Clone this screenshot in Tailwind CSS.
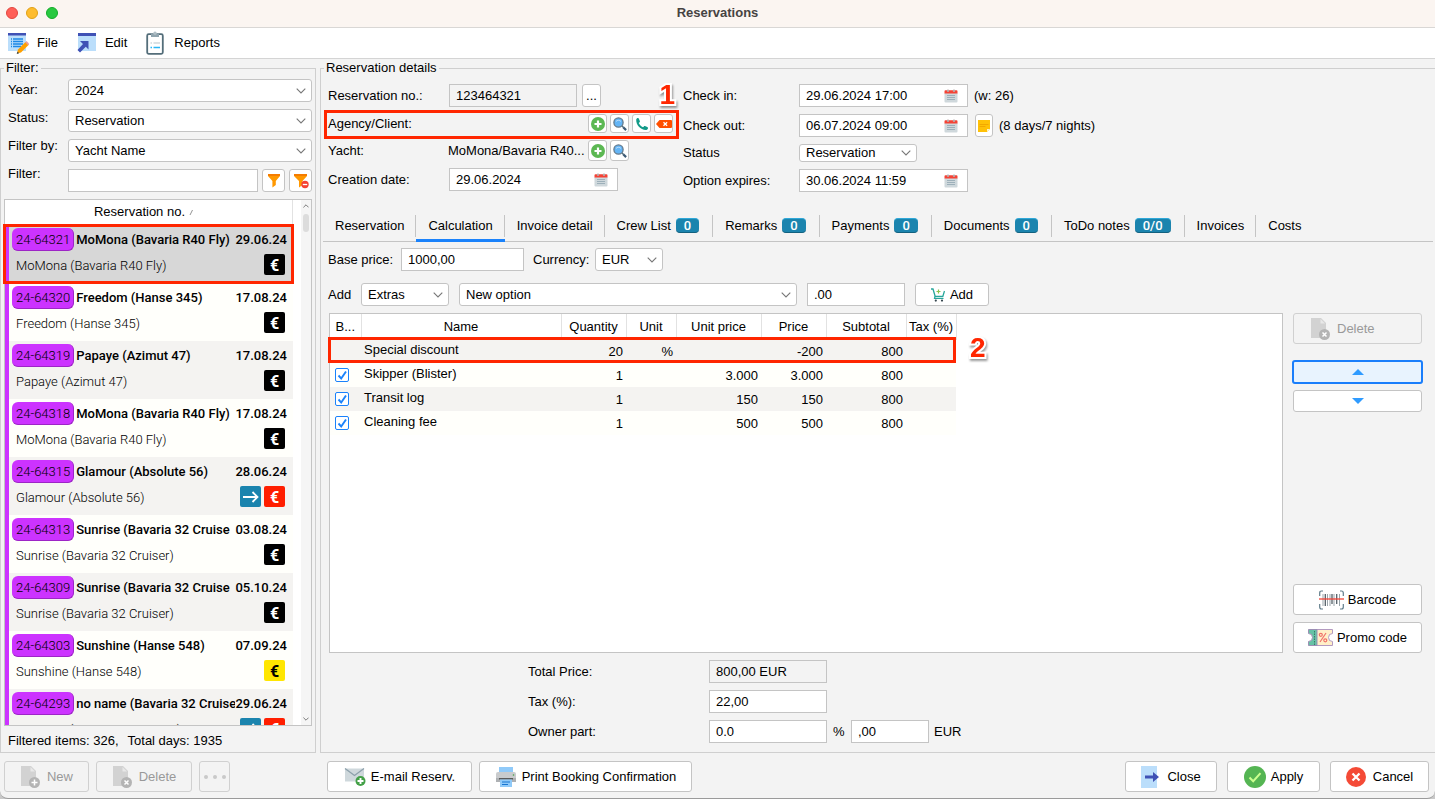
<!DOCTYPE html>
<html lang="en">
<head>
    <meta charset="UTF-8">
    <meta name="viewport" content="width=device-width, initial-scale=1.0">
    <title>Reservations</title>
    <script src="https://cdn.jsdelivr.net/npm/@tailwindcss/browser@4"></script>
</head>
<body class="h-screen overflow-hidden bg-[#c8c8c8] font-['Liberation_Sans',Arial,sans-serif] text-[13px] leading-4 text-black">

    <!-- Shared icons -->
    <svg class="hidden" aria-hidden="true">
        <symbol id="i-chevron" viewBox="0 0 10 6"><path d="M.7.7 5 5 9.3.7" fill="none" stroke="#777" stroke-width="1.1"/></symbol>
        <symbol id="i-calendar" viewBox="0 0 14 14">
            <path d="M.5 4h13v8.500a1 1 0 0 1-1 1h-11a1 1 0 0 1-1-1z" fill="#cfd8dc"/>
            <path d="M.5 4.500V2.300a1 1 0 0 1 1-1h11a1 1 0 0 1 1 1v2.200z" fill="#f44336"/>
            <circle cx="4" cy="1.700" r="1.200" fill="#b9a9a9"/><circle cx="10" cy="1.700" r="1.200" fill="#b9a9a9"/>
            <path d="M3 6.500h8M3 8.500h8M3 10.500h8" stroke="#9db0ba" stroke-width="1"/>
        </symbol>
        <symbol id="i-plus" viewBox="0 0 14 14"><circle cx="7" cy="7" r="7" fill="#5cb853"/><path d="M7 3.500v7M3.500 7h7" stroke="#fff" stroke-width="2.200"/></symbol>
        <symbol id="i-search" viewBox="0 0 14 14">
            <path d="m8.800 8.800 1.500 1.500" stroke="#546e7a" stroke-width="1.500"/>
            <path d="m10.200 10.200 2.900 2.900" stroke="#3d5a74" stroke-width="2.200"/>
            <circle cx="5.500" cy="5.500" r="4.600" fill="#64b5f6" stroke="#62798c" stroke-width="1.300"/>
            <path d="M3 4.500a3.200 3.200 0 0 1 5 0" fill="none" stroke="#bbdefb" stroke-width="1"/>
        </symbol>
        <symbol id="i-doc" viewBox="0 0 20 22">
            <path d="M1 0h10l5 5v15H1z" fill="#d2d2d2"/><path d="M10.500 1v4.500H15z" fill="#e8e8e8"/>
            <circle cx="14.500" cy="16.500" r="5.500" fill="#b4b4b4"/>
        </symbol>
    </svg>

    <div class="flex h-full flex-col rounded-b-lg border-b border-[#9a9a9a] bg-[#f3f3f3]">
        <header class="grid h-[28px] shrink-0 grid-cols-[1fr_auto_1fr] items-center border-b border-[#d9d7d5] bg-[#fbf5f1] px-1.5 pb-px">
            <div class="flex gap-2">
                <button aria-label="Close window" class="size-3 rounded-full border border-[#e2463f] bg-[#ff5f57]"></button>
                <button aria-label="Minimize window" class="size-3 rounded-full border border-[#e1a116] bg-[#febc2e]"></button>
                <button aria-label="Zoom window" class="size-3 rounded-full border border-[#12ac28] bg-[#28c840]"></button>
            </div>
            <h1 class="font-bold text-[#464342]">Reservations</h1>
        </header>

        <nav class="flex h-[31px] shrink-0 items-center gap-[19px] border-b border-[#d4d4d4] bg-white px-2">
            <button class="flex items-center gap-2">
                <svg class="size-[21px]" viewBox="0 0 21 21">
                    <path d="M0 1h18v17H0z" fill="#bbdefb"/><path d="M0 0h18v2.500H0z" fill="#3f51b5"/>
                    <path d="M3 6h1M5 6h10M3 8.500h1M5 8.500h10M3 11h1M5 11h10M3 13.500h1M5 13.500h8" stroke="#1e88e5" stroke-width="1.300"/>
                    <path d="m17.500 9 3 3-7.500 7.500-4 1 1-4z" fill="#ffa000"/><path d="m17.300 9.200 1.200-1.200 3 3-1.200 1.200z" fill="#ef9a9a"/><path d="m9.500 18.500-.8 2.500 2.500-.8z" fill="#37474f"/>
                </svg>
                File
            </button>
            <button class="flex items-center gap-2">
                <svg class="size-5" viewBox="0 0 20 20">
                    <path d="M1 1h18v17H1z" fill="#bbdefb"/><path d="M1 0h18v3H1z" fill="#3f51b5"/>
                    <path d="M3 8h8.500v8.500L8.800 13.800 3 19.500.5 17 6 11z" fill="#3f51b5"/>
                </svg>
                Edit
            </button>
            <button class="flex items-center gap-2">
                <svg class="h-6 w-5" viewBox="0 0 20 24">
                    <rect x="1.200" y="3.200" width="15.600" height="19.600" rx="1.500" fill="#fff" stroke="#546e7a" stroke-width="1.800"/>
                    <path d="M5 2.500h2.500a1.600 1.600 0 0 1 3 0H13V6H5z" fill="#90a4ae"/><circle cx="9" cy="2.200" r="1.700" fill="#b0bec5"/>
                    <path d="M4.500 12H6M7.500 12H14" stroke="#cfd8dc" stroke-width="1.500"/><path d="M4.500 16.500H6M7.500 16.500H14" stroke="#29b6f6" stroke-width="1.500"/>
                </svg>
                Reports
            </button>
        </nav>

        <main class="flex min-h-0 flex-1 gap-1 pt-px">
            <!-- Filter and reservation list -->
            <fieldset class="flex w-[316px] min-w-0 shrink-0 flex-col border border-[#cfcfcf] px-[3px] pt-[3px]">
                <legend class="px-[2px]">Filter:</legend>
                <div class="flex">
                    <div class="flex w-16 shrink-0 flex-col gap-3 pt-[3px] pl-1">
                        <label for="year">Year:</label>
                        <label for="filter-status">Status:</label>
                        <label for="filter-by">Filter by:</label>
                        <label for="filter-text">Filter:</label>
                    </div>
                    <div class="flex min-w-0 flex-1 flex-col gap-[7px]">
                        <div class="grid items-center">
                            <select id="year" class="col-start-1 row-start-1 h-[23px] appearance-none rounded-[3px] border border-[#c4c4c4] bg-white pl-1.5"><option>2024</option></select>
                            <svg class="pointer-events-none col-start-1 row-start-1 mr-1.5 h-1.5 w-2.5 justify-self-end"><use href="#i-chevron"/></svg>
                        </div>
                        <div class="grid items-center">
                            <select id="filter-status" class="col-start-1 row-start-1 h-[23px] appearance-none rounded-[3px] border border-[#c4c4c4] bg-white pl-1.5"><option>Reservation</option></select>
                            <svg class="pointer-events-none col-start-1 row-start-1 mr-1.5 h-1.5 w-2.5 justify-self-end"><use href="#i-chevron"/></svg>
                        </div>
                        <div class="grid items-center">
                            <select id="filter-by" class="col-start-1 row-start-1 h-[23px] appearance-none rounded-[3px] border border-[#c4c4c4] bg-white pl-1.5"><option>Yacht Name</option></select>
                            <svg class="pointer-events-none col-start-1 row-start-1 mr-1.5 h-1.5 w-2.5 justify-self-end"><use href="#i-chevron"/></svg>
                        </div>
                        <div class="flex gap-1">
                            <input id="filter-text" type="text" class="h-[23px] min-w-0 flex-1 border border-[#c4c4c4] bg-white px-1.5">
                            <button aria-label="Apply filter" class="flex h-[23px] w-[23px] items-center justify-center rounded-[3px] border border-[#c4c4c4] bg-white">
                                <svg class="size-3.5" viewBox="0 0 14 14"><path d="M1 0h12v2L8.800 7v4L5.400 13.500V7L1 2z" fill="#ff9800"/><path d="M1 0h12v2H1z" fill="#f57c00"/></svg>
                            </button>
                            <button aria-label="Clear filter" class="flex h-[23px] w-[23px] items-center justify-center rounded-[3px] border border-[#c4c4c4] bg-white">
                                <svg class="size-4" viewBox="0 0 16 16"><path d="M1 1h13v2L9.500 8v4L6 14.500V8L1 3z" fill="#ff9800"/><path d="M1 1h13v2H1z" fill="#f57c00"/><circle cx="12" cy="11.500" r="3.700" fill="#f44336"/><path d="M9.800 11.500h4.400" stroke="#fff" stroke-width="1.300"/></svg>
                            </button>
                        </div>
                    </div>
                </div>

                <div class="relative mt-[7px] flex min-h-0 flex-1 border border-[#c4c4c4] bg-white">
                    <div class="mr-2 flex min-w-0 flex-1 flex-col">
                        <div class="flex h-[25px] shrink-0 items-center justify-center gap-1 border-r border-b border-[#e2e2e2] pr-2">
                            Reservation no.
                            <svg class="size-1.5" viewBox="0 0 6 6"><path d="M1 6 3.500 1" stroke="#888" stroke-width=".9"/></svg>
                        </div>
                        <ul id="reservation-list" class="min-h-0 flex-1 overflow-hidden border-l-4 border-[#cc33ff] font-[Roboto,sans-serif]"></ul>
                    </div>
                    <div class="flex w-2.5 shrink-0 flex-col items-center bg-[#f5f5f5] py-1">
                        <svg class="h-1 w-1.5" viewBox="0 0 10 6"><path d="M.7 5.300 5 1l4.300 4.300" fill="none" stroke="#777" stroke-width="1.600"/></svg>
                        <div class="mt-1.5 h-[18px] w-1.5 rounded-full bg-[#dcdcdc]"></div>
                        <svg class="mt-auto h-1 w-1.5" viewBox="0 0 10 6"><path d="M.7.7 5 5 9.300.7" fill="none" stroke="#777" stroke-width="1.600"/></svg>
                    </div>
                    <div class="pointer-events-none absolute top-6 right-[17px] -left-0.5 h-[60px] border-3 border-[#ff2600]"></div>
                </div>
                <p class="flex h-[26px] shrink-0 items-center gap-[9px] pt-1 pl-1"><span>Filtered items: 326,</span><span>Total days: 1935</span></p>
            </fieldset>

            <!-- Reservation details -->
            <fieldset class="flex min-w-0 flex-1 flex-col border border-r-0 border-[#cfcfcf] pt-2">
                <legend class="ml-[3px] px-[2px]">Reservation details</legend>
                <div class="flex pl-[7px]">
                    <div class="flex w-[355px] shrink-0 flex-col gap-[7px]">
                        <div class="flex items-center">
                            <label for="res-no" class="w-[121px]">Reservation no.:</label>
                            <input id="res-no" type="text" readonly value="123464321" class="mr-[5px] h-[23px] w-32 border border-[#c4c4c4] px-1.5">
                            <button aria-label="Browse" class="h-[23px] w-[19px] rounded-[3px] border border-[#c4c4c4] bg-white">...</button>
                        </div>
                        <div class="relative flex h-[19px] items-center">
                            <span class="w-[260px]">Agency/Client:</span>
                            <div class="flex gap-[3px]">
                                <button aria-label="Add client" class="flex size-[19px] items-center justify-center rounded-[3px] border border-[#c4c4c4] bg-white"><svg class="size-3.5"><use href="#i-plus"/></svg></button>
                                <button aria-label="Find client" class="flex size-[19px] items-center justify-center rounded-[3px] border border-[#c4c4c4] bg-white"><svg class="size-3.5"><use href="#i-search"/></svg></button>
                                <button aria-label="Call client" class="flex size-[19px] items-center justify-center rounded-[3px] border border-[#c4c4c4] bg-white">
                                    <svg class="size-3.5" viewBox="0 0 14 14"><path d="M1.200 2.600C1.300 1.700 2.200 1 3 1c.5 0 .7.300.9.8l1 2.400c.1.400 0 .7-.3 1L3.700 6c.9 1.900 2.400 3.400 4.300 4.300l.9-.9c.3-.3.6-.4 1-.3l2.400 1c.5.2.7.500.7 1 0 .9-.8 1.800-1.700 1.900C5.800 13.300.9 8.200 1.200 2.600z" fill="#129a88"/></svg>
                                </button>
                                <button aria-label="Remove client" class="flex size-[19px] items-center justify-center rounded-[3px] border border-[#c4c4c4] bg-white">
                                    <svg class="h-2 w-4 shrink-0" viewBox="0 0 16 8"><path d="M3.500 0H15a1 1 0 0 1 1 1v6a1 1 0 0 1-1 1H3.500L0 4z" fill="#ff4f00"/><path d="m7.500 2.200 3.600 3.600m0-3.600L7.500 5.800" stroke="#fff" stroke-width="1.300"/></svg>
                                </button>
                            </div>
                            <div class="pointer-events-none absolute -top-1 right-1 -left-1 h-[29px] border-3 border-[#ff2600]"></div>
                            <span class="absolute right-2 bottom-6 text-[28px] leading-7 font-bold text-[#ff2600] drop-shadow-[1px_2px_1px_rgba(0,0,0,0.4)] [-webkit-text-stroke:4px_white] [paint-order:stroke_fill]">1</span>
                        </div>
                        <div class="flex h-[21px] items-center">
                            <span class="w-[120px]">Yacht:</span>
                            <span class="w-[140px] whitespace-nowrap">MoMona/Bavaria R40...</span>
                            <div class="flex gap-[3px]">
                                <button aria-label="Add yacht" class="flex h-[21px] w-[19px] items-center justify-center rounded-[3px] border border-[#c4c4c4] bg-white"><svg class="size-3.5"><use href="#i-plus"/></svg></button>
                                <button aria-label="Find yacht" class="flex h-[21px] w-[19px] items-center justify-center rounded-[3px] border border-[#c4c4c4] bg-white"><svg class="size-3.5"><use href="#i-search"/></svg></button>
                            </div>
                        </div>
                        <div class="flex items-center">
                            <label for="created" class="w-[121px]">Creation date:</label>
                            <div class="flex h-[23px] w-[169px] items-center border border-[#c4c4c4] bg-white pr-[9px] pl-1.5">
                                <input id="created" type="text" value="29.06.2024" class="min-w-0 flex-1">
                                <button aria-label="Pick creation date"><svg class="size-3.5"><use href="#i-calendar"/></svg></button>
                            </div>
                        </div>
                    </div>

                    <div class="flex flex-col gap-[7px]">
                        <div class="flex items-center">
                            <label for="check-in" class="w-[116px]">Check in:</label>
                            <div class="flex h-[23px] w-[169px] items-center border border-[#c4c4c4] bg-white pr-[9px] pl-1.5">
                                <input id="check-in" type="text" value="29.06.2024 17:00" class="min-w-0 flex-1">
                                <button aria-label="Pick check in date"><svg class="size-3.5"><use href="#i-calendar"/></svg></button>
                            </div>
                            <span class="ml-1.5">(w: 26)</span>
                        </div>
                        <div class="flex items-center">
                            <label for="check-out" class="w-[116px]">Check out:</label>
                            <div class="flex h-[23px] w-[169px] items-center border border-[#c4c4c4] bg-white pr-[9px] pl-1.5">
                                <input id="check-out" type="text" value="06.07.2024 09:00" class="min-w-0 flex-1">
                                <button aria-label="Pick check out date"><svg class="size-3.5"><use href="#i-calendar"/></svg></button>
                            </div>
                            <button aria-label="Note" class="mr-1.5 ml-[7px] flex h-[23px] w-[18px] items-center justify-center rounded-[3px] border border-[#c4c4c4] bg-white">
                                <svg class="size-3 shrink-0" viewBox="0 0 12 12"><path d="M0 0h12v9l-3 3H0z" fill="#ffc107"/><path d="M9 12V9h3z" fill="#fff3c4"/><path d="M1.500 4.500h9M1.500 6.500h6" stroke="#f0a500" stroke-width=".9"/></svg>
                            </button>
                            <span>(8 days/7 nights)</span>
                        </div>
                        <div class="flex items-center">
                            <label for="status" class="w-[116px]">Status</label>
                            <div class="grid w-[118px] items-center">
                                <select id="status" class="col-start-1 row-start-1 h-[18px] appearance-none rounded-[3px] border border-[#c4c4c4] bg-white pl-1.5"><option>Reservation</option></select>
                                <svg class="pointer-events-none col-start-1 row-start-1 mr-1.5 h-1.5 w-2.5 justify-self-end"><use href="#i-chevron"/></svg>
                            </div>
                        </div>
                        <div class="flex items-center">
                            <label for="expires" class="w-[116px]">Option expires:</label>
                            <div class="flex h-[23px] w-[169px] items-center border border-[#c4c4c4] bg-white pr-[9px] pl-1.5">
                                <input id="expires" type="text" value="30.06.2024 11:59" class="min-w-0 flex-1">
                                <button aria-label="Pick option date"><svg class="size-3.5"><use href="#i-calendar"/></svg></button>
                            </div>
                        </div>
                    </div>
                </div>

                <div id="tabs" role="tablist" class="mx-0.5 mt-4 flex h-[34px] shrink-0 items-center border-b border-[#c4c4c4] whitespace-nowrap"></div>

                <div class="flex min-h-0 flex-1 flex-col pt-1.5 pb-[9px] pl-[7px]">
                    <div class="flex items-center">
                        <label for="base-price" class="w-[73px]">Base price:</label>
                        <input id="base-price" type="text" value="1000,00" class="mr-[9px] h-[23px] w-[123px] border border-[#c4c4c4] bg-white px-1.5">
                        <label for="currency" class="w-[62px]">Currency:</label>
                        <div class="grid w-[68px] items-center">
                            <select id="currency" class="col-start-1 row-start-1 h-[23px] appearance-none rounded-[3px] border border-[#c4c4c4] bg-white pl-1.5"><option>EUR</option></select>
                            <svg class="pointer-events-none col-start-1 row-start-1 mr-1.5 h-1.5 w-2.5 justify-self-end"><use href="#i-chevron"/></svg>
                        </div>
                    </div>
                    <div class="mt-3 flex items-center">
                        <label for="add-type" class="w-[33px]">Add</label>
                        <div class="mr-2.5 grid w-[88px] items-center">
                            <select id="add-type" class="col-start-1 row-start-1 h-[23px] appearance-none rounded-[3px] border border-[#c4c4c4] bg-white pl-1.5"><option>Extras</option></select>
                            <svg class="pointer-events-none col-start-1 row-start-1 mr-1.5 h-1.5 w-2.5 justify-self-end"><use href="#i-chevron"/></svg>
                        </div>
                        <div class="mr-2.5 grid w-[338px] items-center">
                            <select aria-label="Option" class="col-start-1 row-start-1 h-[23px] appearance-none rounded-[3px] border border-[#c4c4c4] bg-white pl-1.5"><option>New option</option></select>
                            <svg class="pointer-events-none col-start-1 row-start-1 mr-1.5 h-1.5 w-2.5 justify-self-end"><use href="#i-chevron"/></svg>
                        </div>
                        <input aria-label="Amount" type="text" value=".00" class="mr-2.5 h-[23px] w-[98px] border border-[#c4c4c4] bg-white px-1.5">
                        <button class="flex h-[23px] w-[74px] items-center justify-center gap-[5px] rounded-[3px] border border-[#c4c4c4] bg-white">
                            <svg class="size-3.5" viewBox="0 0 14 14"><path d="M0 1h2l2.200 7.500h7.600L13.500 3" fill="none" stroke="#26a69a" stroke-width="1.300"/><path d="M4 8.500 3.500 10.500h9" fill="none" stroke="#26a69a" stroke-width="1.200"/><path d="M7.500 1.500v4M5.500 3.500h4" stroke="#8bc34a" stroke-width="1.200"/><circle cx="4.800" cy="12.600" r="1.100" fill="#37474f"/><circle cx="11" cy="12.600" r="1.100" fill="#37474f"/></svg>
                            Add
                        </button>
                    </div>

                    <div class="mt-[7px] flex min-h-0 flex-1 gap-2.5 pr-[13px] pl-px">
                        <div class="relative min-w-0 flex-1 border border-[#c4c4c4] bg-white">
                            <table class="w-[626px] table-fixed">
                                <thead>
                                    <tr class="h-[25px] border-b border-[#e2e2e2] *:border-r *:border-[#e2e2e2] *:pt-px *:font-normal">
                                        <th class="w-[31px]">B...</th>
                                        <th class="w-[200px]">Name</th>
                                        <th class="w-[65px]">Quantity</th>
                                        <th class="w-[50px]">Unit</th>
                                        <th class="w-[85px]">Unit price</th>
                                        <th class="w-[65px]">Price</th>
                                        <th class="w-20">Subtotal</th>
                                        <th class="w-[50px] whitespace-nowrap">Tax (%)</th>
                                    </tr>
                                </thead>
                                <tbody id="price-rows"></tbody>
                            </table>
                            <div class="pointer-events-none absolute top-[23px] -left-0.5 h-[26px] w-[628px] border-3 border-[#ff2600]"></div>
                            <span class="absolute top-5 left-[640px] text-[28px] leading-7 font-bold text-[#ff2600] drop-shadow-[1px_2px_1px_rgba(0,0,0,0.4)] [-webkit-text-stroke:4px_white] [paint-order:stroke_fill]">2</span>
                        </div>
                        <div class="flex w-[129px] shrink-0 flex-col">
                            <button disabled class="flex h-[31px] items-center gap-[7px] rounded-[3px] border border-[#d0d0d0] pl-4 text-[#999]">
                                <svg class="h-[22px] w-5" viewBox="0 0 20 22"><use href="#i-doc" width="20" height="22"/><path d="m12.500 14.500 4 4m0-4-4 4" stroke="#fff" stroke-width="1.500"/></svg>
                                Delete
                            </button>
                            <button aria-label="Move up" class="-mx-px mt-4 flex h-6 items-center justify-center rounded-[3px] border-2 border-[#1a7efb] bg-[#e8f3fe]"><svg class="h-1.5 w-3" viewBox="0 0 12 6"><path d="M0 6 6 0l6 6z" fill="#2f9bff"/></svg></button>
                            <button aria-label="Move down" class="mt-1.5 flex h-[22px] items-center justify-center rounded-[3px] border border-[#c4c4c4] bg-white"><svg class="h-1.5 w-3" viewBox="0 0 12 6"><path d="M0 0h12L6 6z" fill="#2f9bff"/></svg></button>
                            <button class="mt-auto flex h-[31px] items-center justify-center gap-1 rounded-[3px] border border-[#c4c4c4] bg-white">
                                <svg class="h-5 w-[25px]" viewBox="0 0 25 20">
                                    <path d="M4 1H2.500Q.7 1 .7 3v3M21 1h1.500q1.800 0 1.800 2v3M4 19H2.500Q.7 19 .7 17v-3M21 19h1.500q1.800 0 1.800-2v-3" fill="none" stroke="#607d8b" stroke-width="1.200"/>
                                    <path d="M4 4v12M8.500 4v12M11 4v12M15 4v12M20.500 4v12" stroke="#9aa5ab" stroke-width="1"/><path d="M6.300 4v12M13 4v10M17.700 4v10" stroke="#546068" stroke-width="1.300"/>
                                    <path d="M0 9h25" stroke="#f44336" stroke-width="1.300"/>
                                </svg>
                                Barcode
                            </button>
                            <button class="mt-[7px] flex h-[31px] items-center justify-center gap-1 rounded-[3px] border border-[#c4c4c4] bg-white">
                                <svg class="h-[17px] w-[25px]" viewBox="0 0 25 17">
                                    <path d="M8 .5h16.500v4a4 4 0 0 0 0 8v4H8z" fill="#fff0c8" stroke="#b39ac0"/>
                                    <path d="M.5.500H9v16H.5v-4a4 4 0 0 0 0-8z" fill="#66c2a5" stroke="#9c8fb5"/>
                                    <path d="M6.500 2v14" stroke="#38796a" stroke-dasharray="1.500 1"/>
                                    <path d="m12 13 6-9" stroke="#f0716a" stroke-width="1.200"/><circle cx="12.800" cy="5.800" r="1.500" fill="none" stroke="#f0716a" stroke-width="1.200"/><circle cx="17.300" cy="11.300" r="1.500" fill="none" stroke="#f0716a" stroke-width="1.200"/>
                                </svg>
                                Promo code
                            </button>
                        </div>
                    </div>

                    <div class="mt-[7px] ml-[200px] flex flex-col gap-[7px]">
                        <div class="flex items-center">
                            <label for="total" class="w-[181px]">Total Price:</label>
                            <input id="total" type="text" readonly value="800,00 EUR" class="h-[23px] w-[118px] border border-[#c4c4c4] px-1.5">
                        </div>
                        <div class="flex items-center">
                            <label for="tax" class="w-[181px]">Tax (%):</label>
                            <input id="tax" type="text" value="22,00" class="h-[23px] w-[118px] border border-[#c4c4c4] bg-white px-1.5">
                        </div>
                        <div class="flex items-center">
                            <label for="owner" class="w-[181px]">Owner part:</label>
                            <input id="owner" type="text" value="0.0" class="h-[23px] w-[118px] border border-[#c4c4c4] bg-white px-1.5">
                            <span class="w-6 pl-1.5">%</span>
                            <input aria-label="Owner amount" type="text" value=",00" class="mr-[5px] h-[23px] w-[78px] border border-[#c4c4c4] bg-white px-1.5">
                            EUR
                        </div>
                    </div>
                </div>
            </fieldset>
        </main>

        <footer class="flex shrink-0 gap-[7px] pt-2 pr-1.5 pb-1.5 pl-1">
            <button disabled class="flex h-[31px] w-[85px] items-center justify-center gap-[7px] rounded-[3px] border border-[#d0d0d0] text-[#999]">
                <svg class="h-[22px] w-5" viewBox="0 0 20 22"><use href="#i-doc" width="20" height="22"/><path d="M14.500 13.500v6m-3-3h6" stroke="#fff" stroke-width="1.500"/></svg>
                New
            </button>
            <button disabled class="flex h-[31px] w-24 items-center justify-center gap-[7px] rounded-[3px] border border-[#d0d0d0] text-[#999]">
                <svg class="h-[22px] w-5" viewBox="0 0 20 22"><use href="#i-doc" width="20" height="22"/><path d="m12.500 14.500 4 4m0-4-4 4" stroke="#fff" stroke-width="1.500"/></svg>
                Delete
            </button>
            <button disabled aria-label="More" class="flex h-[31px] w-[31px] items-center justify-center gap-[5px] rounded-[3px] border border-[#d0d0d0]">
                <span class="size-1 shrink-0 rounded-full bg-[#c9c9c9]"></span><span class="size-1 shrink-0 rounded-full bg-[#c9c9c9]"></span><span class="size-1 shrink-0 rounded-full bg-[#c9c9c9]"></span>
            </button>
            <button class="ml-[90px] flex h-[31px] w-[145px] items-center justify-center gap-[5px] rounded-[3px] border border-[#c4c4c4] bg-white">
                <svg class="h-5 w-[22px]" viewBox="0 0 22 20"><path d="M1 1.500h19v13H1z" fill="#cfd8dc"/><path d="m1 1.500 9.500 7 9.500-7" fill="none" stroke="#8da0ab" stroke-width="1.300"/><circle cx="16.500" cy="14" r="5" fill="#43a047"/><path d="M16.500 11v6m-3-3h6" stroke="#fff" stroke-width="1.900"/></svg>
                E-mail Reserv.
            </button>
            <button class="flex h-[31px] w-[213px] items-center justify-center gap-[5px] rounded-[3px] border border-[#c4c4c4] bg-white">
                <svg class="size-[22px]" viewBox="0 0 22 22"><path d="M4 1h14v6H4z" fill="#90caf9"/><path d="M3 6h16a2 2 0 0 1 2 2v8H1V8a2 2 0 0 1 2-2z" fill="#c9cbcd"/><path d="M1 12h20v4H1z" fill="#aeb1b4"/><path d="M4 12h14v1.500H4z" fill="#5a5a5a"/><path d="M5 13.500h12V21H5z" fill="#90caf9"/><path d="M7 16h8M7 18.500h6" stroke="#1976d2" stroke-width="1.200"/><circle cx="18.500" cy="9" r=".8" fill="#43a047"/></svg>
                Print Booking Confirmation
            </button>
            <div class="ml-auto flex gap-2.5">
                <button class="flex h-[31px] w-[92px] items-center justify-center gap-2 rounded-[3px] border border-[#c4c4c4] bg-white">
                    <svg class="h-[22px] w-[18px]" viewBox="0 0 18 22"><path d="M0 0h16v22H0z" fill="#bbdefb"/><path d="M4 9.500h8V6l6 5-6 5v-3.500H4z" fill="#3f51b5"/></svg>
                    Close
                </button>
                <button class="flex h-[31px] w-[93px] items-center justify-center gap-[5px] rounded-[3px] border border-[#c4c4c4] bg-white">
                    <svg class="size-[22px]" viewBox="0 0 22 22"><circle cx="11" cy="11" r="11" fill="#55b553"/><path d="m5.500 11.500 3.700 3.700 7.300-8" fill="none" stroke="#ccff90" stroke-width="2"/></svg>
                    Apply
                </button>
                <button class="flex h-[31px] w-[99px] items-center justify-center gap-[7px] rounded-[3px] border border-[#c4c4c4] bg-white">
                    <svg class="size-5" viewBox="0 0 20 20"><circle cx="10" cy="10" r="10" fill="#f44a36"/><path d="m6.500 6.500 7 7m0-7-7 7" stroke="#fff" stroke-width="2.300"/></svg>
                    Cancel
                </button>
            </div>
        </footer>
    </div>

    <script>
        // --- Data ---
        const reservations = [
            { no: '24-64321', title: 'MoMona (Bavaria R40 Fly)', yacht: 'MoMona (Bavaria R40 Fly)', date: '29.06.24', pay: 'black' },
            { no: '24-64320', title: 'Freedom (Hanse 345)', yacht: 'Freedom (Hanse 345)', date: '17.08.24', pay: 'black' },
            { no: '24-64319', title: 'Papaye (Azimut 47)', yacht: 'Papaye (Azimut 47)', date: '17.08.24', pay: 'black' },
            { no: '24-64318', title: 'MoMona (Bavaria R40 Fly)', yacht: 'MoMona (Bavaria R40 Fly)', date: '17.08.24', pay: 'black' },
            { no: '24-64315', title: 'Glamour (Absolute 56)', yacht: 'Glamour (Absolute 56)', date: '28.06.24', pay: 'red', arrow: true },
            { no: '24-64313', title: 'Sunrise (Bavaria 32 Cruise', yacht: 'Sunrise (Bavaria 32 Cruiser)', date: '03.08.24', pay: 'black' },
            { no: '24-64309', title: 'Sunrise (Bavaria 32 Cruise', yacht: 'Sunrise (Bavaria 32 Cruiser)', date: '05.10.24', pay: 'black' },
            { no: '24-64303', title: 'Sunshine (Hanse 548)', yacht: 'Sunshine (Hanse 548)', date: '07.09.24', pay: 'yellow' },
            { no: '24-64293', title: 'no name (Bavaria 32 Cruise', yacht: 'no name (Bavaria 32 Cruiser)', date: '29.06.24', pay: 'red', arrow: true }
        ];
        const payColors = {
            black: 'bg-black text-white',
            red: 'bg-[#ff1e00] text-white',
            yellow: 'bg-[#ffe600] text-black'
        };
        const tabs = [
            ['Reservation'], ['Calculation'], ['Invoice detail'], ['Crew List', '0'], ['Remarks', '0'],
            ['Payments', '0'], ['Documents', '0'], ['ToDo notes', '0/0'], ['Invoices'], ['Costs']
        ];
        const priceRows = [
            ['Special discount', '20', '%', '', '-200', '800'],
            ['Skipper (Blister)', '1', '', '3.000', '3.000', '800'],
            ['Transit log', '1', '', '150', '150', '800'],
            ['Cleaning fee', '1', '', '500', '500', '800']
        ];

        // --- Reservation list ---
        document.getElementById('reservation-list').innerHTML = reservations.map((r, i) => `
            <li class="h-[58px] pt-[3px] pr-1.5 pl-[3px] whitespace-nowrap ${i === 0 ? 'bg-[#d7d7d7]' : i % 2 ? 'bg-[#fffffb]' : 'bg-[#f4f3f1]'}">
                <div class="flex h-[23px] items-center">
                    <span class="mr-0.5 flex h-[23px] items-center rounded-md border-r border-b border-[#9d25c6] bg-[#cc33ff] pt-0.5 pr-[3px] pl-1 font-light">${r.no}</span>
                    <span class="min-w-0 flex-1 overflow-hidden font-medium">${r.title}</span>
                    <span class="font-medium">${r.date}</span>
                </div>
                <div class="mt-[3px] flex h-[21px] items-center gap-[3px] pr-0.5 pl-1">
                    <span class="min-w-0 flex-1 pt-0.5 font-light">${r.yacht}</span>
                    ${r.arrow ? `<span class="flex size-[21px] items-center justify-center rounded-[2px] bg-[#1b84ae]"><svg class="h-3 w-4" viewBox="0 0 16 12"><path d="M0 6h14.500M9.500 1l5 5-5 5" fill="none" stroke="#fff" stroke-width="1.800"/></svg></span>` : ''}
                    <span class="flex size-[21px] items-center justify-center rounded-[2px] pt-0.5 text-base font-bold ${payColors[r.pay]}">€</span>
                </div>
            </li>
        `).join('');

        // --- Tabs ---
        document.getElementById('tabs').innerHTML = tabs.map(([name, count], i) => `
            <button role="tab" aria-selected="${i === 1}" class="-mb-px h-[34px] border-b-3 pt-1 ${i === 1 ? 'border-[#1a82fb]' : 'border-transparent'}">
                <span class="flex h-[22px] items-center gap-[5px] pl-3 ${count ? 'pr-[13px]' : 'pr-[11px]'} ${i < tabs.length - 1 ? 'border-r border-[#c4c4c4]' : ''}">
                    ${name}
                    ${count ? `<span class="h-[15px] rounded-[4px] border-t border-b border-t-[#2fa8d8] border-b-[#12617f] bg-[#1b84ae] px-2 leading-[13px] font-medium text-white font-[Roboto,sans-serif]">${count}</span>` : ''}
                </span>
            </button>
        `).join('');

        // --- Price table ---
        document.getElementById('price-rows').innerHTML = priceRows.map(([name, ...cells], i) => `
            <tr class="h-6 ${i % 2 ? 'bg-[#fffffb]' : 'bg-[#f4f3f1]'}">
                <td class="pl-[5px]">${i ? `
                    <div class="grid w-3.5">
                        <input type="checkbox" checked aria-label="${name}" class="peer col-start-1 row-start-1 size-3.5 appearance-none rounded-[2px] border border-[#1a82fb] bg-white">
                        <svg class="pointer-events-none invisible col-start-1 row-start-1 size-3.5 peer-checked:visible" viewBox="0 0 14 14"><path d="m3.500 7.500 2.700 3L11 3.500" fill="none" stroke="#1a82fb" stroke-width="1.900"/></svg>
                    </div>` : ''}
                </td>
                <td class="pb-0.5 pl-[3px]">${name}</td>
                ${cells.map(c => `<td class="pt-px pr-[3px] text-right">${c}</td>`).join('')}
                <td></td>
            </tr>
        `).join('');
    </script>

</body>
</html>
